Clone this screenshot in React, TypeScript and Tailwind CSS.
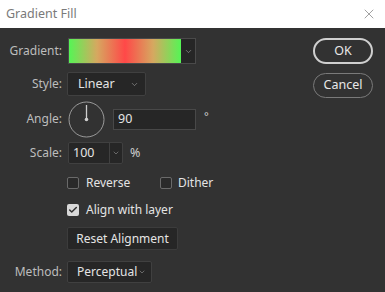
import { Check, ChevronDown, X } from 'lucide-react';

const font = { fontFamily: '"Noto Sans", "Open Sans", Arial, sans-serif' };

function Label({ children }: { children: string }) {
    return <span className="w-[62px] shrink-0 text-right text-[12px] text-[#bdbdbd]">{children}</span>;
}

export default function App() {
    return (
        <div style={font} className="w-[385px] h-[292px] flex flex-col bg-[#323232] overflow-hidden">
            {/* title bar */}
            <div className="h-[28px] shrink-0 bg-white flex items-center justify-between pl-[6px] pr-[8px]">
                <span className="text-[12.5px] text-[#7a7a7a]">Gradient Fill</span>
                <X className="w-[16px] h-[16px] text-[#8a8a8a]" strokeWidth={1.2} />
            </div>

            <div className="flex flex-1">
                {/* form */}
                <div className="flex-1 flex flex-col text-[12px] text-[#e4e4e4]">
                    <div className="flex items-center gap-[6px] mt-[10px] h-[26px]">
                        <Label>Gradient:</Label>
                        <div className="flex h-[26px] border border-[#4a4a4a] bg-[#262626]">
                            <div className="w-[112px] h-[24px] bg-[linear-gradient(90deg,#55f555_0%,#d6a860_25%,#ff4848_50%,#d6a860_75%,#55f555_100%)]" />
                            <div className="w-[14px] flex items-center justify-center">
                                <ChevronDown className="w-[9px] h-[9px] text-[#aaa]" strokeWidth={1.5} />
                            </div>
                        </div>
                    </div>

                    <div className="flex items-center gap-[5px] mt-[8px] h-[24px]">
                        <Label>Style:</Label>
                        <div className="w-[79px] h-[24px] flex items-center justify-between pl-[10px] pr-[6px] bg-[#262626] border border-[#404040] rounded-[2px]">
                            <span className="text-[12.5px]">Linear</span>
                            <ChevronDown className="w-[9px] h-[9px] text-[#aaa]" strokeWidth={1.5} />
                        </div>
                    </div>

                    <div className="flex items-center gap-[6px] mt-[5px] h-[36px]">
                        <Label>Angle:</Label>
                        <svg width="37" height="37" viewBox="0 0 37 37" className="shrink-0">
                            <circle cx="18.5" cy="18.5" r="17.5" fill="none" stroke="#9a9a9a" strokeWidth="1" />
                            <line x1="18.5" y1="4" x2="18.5" y2="18.5" stroke="#cfcfcf" strokeWidth="1.3" />
                            <circle cx="18.5" cy="18.5" r="1.8" fill="#cfcfcf" />
                        </svg>
                        <div className="ml-[2px] w-[83px] h-[21px] flex items-center pl-[4px] bg-[#262626] border border-[#484848]">
                            <span className="text-[12.5px]">90</span>
                        </div>
                        <span className="ml-[2px] -mt-[6px] text-[11px] text-[#d0d0d0]">°</span>
                    </div>

                    <div className="flex items-center gap-[6px] mt-[5px] h-[22px]">
                        <Label>Scale:</Label>
                        <div className="w-[55px] h-[22px] flex bg-[#262626] border border-[#404040] rounded-[2px]">
                            <span className="w-[41px] pl-[4px] leading-[20px] text-[12.5px] border-r border-[#404040]">100</span>
                            <div className="flex-1 flex items-center justify-center">
                                <ChevronDown className="w-[8px] h-[8px] text-[#aaa]" strokeWidth={1.5} />
                            </div>
                        </div>
                        <span className="ml-[1px] text-[12.5px] text-[#cfcfcf]">%</span>
                    </div>

                    <div className="flex items-center mt-[13px] h-[12px] pl-[67px]">
                        <span className="w-[12px] h-[12px] rounded-[2px] border border-[#6a6a6a] bg-[#2a2a2a]" />
                        <span className="ml-[7px] w-[74px]">Reverse</span>
                        <span className="w-[12px] h-[12px] rounded-[2px] border border-[#6a6a6a] bg-[#2a2a2a]" />
                        <span className="ml-[6px]">Dither</span>
                    </div>

                    <div className="flex items-center mt-[15px] h-[12px] pl-[67px]">
                        <span className="w-[12px] h-[12px] rounded-[2px] bg-[#d8d8d8] flex items-center justify-center">
                            <Check className="w-[10px] h-[10px] text-[#303030]" strokeWidth={3.5} />
                        </span>
                        <span className="ml-[7px]">Align with layer</span>
                    </div>

                    <div className="mt-[11px] pl-[67px]">
                        <div className="w-[111px] h-[23px] flex items-center justify-center bg-[#262626] border border-[#3c3c3c] rounded-[2px]">
                            Reset Alignment
                        </div>
                    </div>

                    <div className="flex items-center gap-[5px] mt-[11px] h-[22px]">
                        <Label>Method:</Label>
                        <div className="w-[85px] h-[22px] flex items-center justify-between pl-[9px] pr-[5px] bg-[#262626] border border-[#404040] rounded-[2px]">
                            <span>Perceptual</span>
                            <ChevronDown className="w-[8px] h-[8px] text-[#aaa]" strokeWidth={1.5} />
                        </div>
                    </div>
                </div>

                {/* buttons */}
                <div className="w-[72px] shrink-0 flex flex-col pt-[10px] gap-[9px] text-[12.5px] text-[#e8e8e8]">
                    <div className="w-[60px] h-[26px] flex items-center justify-center rounded-full border-2 border-[#cfcfcf]">OK</div>
                    <div className="w-[60px] h-[25px] flex items-center justify-center rounded-full border border-[#7a7a7a]">Cancel</div>
                </div>
            </div>
        </div>
    );
}
